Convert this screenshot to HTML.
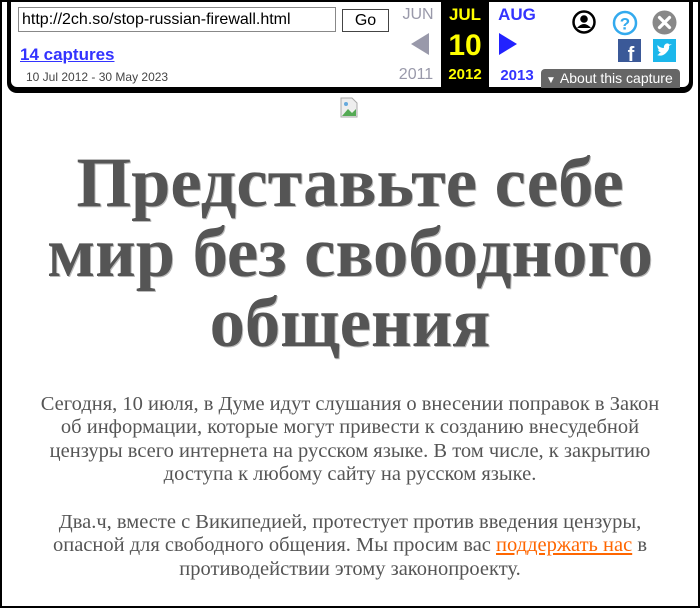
<!DOCTYPE html>
<html><head><meta charset="utf-8"><style>
html,body{margin:0;padding:0;background:#fff;width:700px;height:608px;overflow:hidden;position:relative}
#frame{position:absolute;left:0;top:0;width:696px;height:604px;border:2px solid #000;z-index:5;pointer-events:none}
#tb{position:absolute;left:7px;top:-8px;width:686px;height:101px;background:#000;border-radius:10px;z-index:3}
#in{position:absolute;left:4px;top:0;width:678px;height:95px;background:#fff;border-radius:0 0 6px 6px;font-family:"Liberation Sans",Arial,sans-serif}
.a{position:absolute}
#url{left:7px;top:15px;width:313px;height:23px;border:1px solid #888;font-size:16px;line-height:23px;padding-left:3px;color:#000;box-sizing:content-box}
#go{left:331px;top:17px;width:45px;height:21px;border:1px solid #444;font-size:16px;line-height:21px;text-align:center}
#col{left:430px;top:0;width:48px;height:95px;background:#000}
.m{font-size:16px;text-align:center;width:44px}
h1{position:absolute;left:0;top:148px;width:700px;margin:0;text-align:center;font-family:"Liberation Serif","Noto Serif CJK SC",serif;font-weight:bold;font-size:70.5px;line-height:70px;color:#555;text-shadow:1px 1px 0 #bbb}
p{position:absolute;left:0;width:700px;margin:0;text-align:center;font-family:"Liberation Serif","Noto Serif CJK SC",serif;font-size:20.5px;line-height:23.3px;color:#555;white-space:nowrap}
a.l{color:#f60;text-decoration:underline}
</style></head><body>
<div id="frame"></div>
<div id="tb"><div id="in">
<div class="a" id="url">http://2ch.so/stop-russian-firewall.html</div>
<div class="a" id="go">Go</div>
<div class="a" style="left:9px;top:53px;font-size:17px;font-weight:bold;color:#33f;text-decoration:underline">14 captures</div>
<div class="a" style="left:15px;top:78px;font-size:12px;color:#444">10 Jul 2012 - 30 May 2023</div>
<div class="a m" style="left:385px;top:14px;color:#99a">JUN</div>
<svg class="a" style="left:400px;top:41px" width="18" height="22"><polygon points="18,0 18,22 0,11" fill="#99a"/></svg>
<div class="a m" style="left:383px;top:74px;color:#99a">2011</div>
<div id="col" class="a"></div>
<div class="a m" style="left:432px;top:13px;color:#ff0;font-weight:bold;font-size:17px">JUL</div>
<div class="a m" style="left:432px;top:37px;color:#ff0;font-weight:bold;font-size:30px">10</div>
<div class="a m" style="left:432px;top:74px;color:#ff0;font-weight:bold;font-size:15px">2012</div>
<div class="a m" style="left:484px;top:13px;color:#33f;font-weight:bold;font-size:17px">AUG</div>
<svg class="a" style="left:488px;top:41px" width="18" height="22"><polygon points="0,0 0,22 18,11" fill="#22f"/></svg>
<div class="a m" style="left:484px;top:75px;color:#33f;font-weight:bold;font-size:15px">2013</div>
<svg class="a" style="left:561px;top:18px" width="24" height="24"><circle cx="12" cy="12" r="10.5" fill="none" stroke="#000" stroke-width="2.5"/><circle cx="12" cy="9" r="3.8" fill="#000"/><path d="M5 18 Q12 10 19 18 Z" fill="#000"/></svg>
<svg class="a" style="left:601px;top:18px" width="26" height="26"><circle cx="13" cy="13" r="11" fill="none" stroke="#3ae" stroke-width="2.5"/><text x="13" y="19.5" text-anchor="middle" font-family="Liberation Sans" font-weight="bold" font-size="17" fill="#3ae">?</text></svg>
<svg class="a" style="left:641px;top:18px" width="25" height="25"><circle cx="12.5" cy="12.5" r="12" fill="#888"/><path d="M7.5 7.5 L17.5 17.5 M17.5 7.5 L7.5 17.5" stroke="#fff" stroke-width="3.2" stroke-linecap="round"/></svg>
<svg class="a" style="left:607px;top:47px" width="23" height="23"><rect width="23" height="23" fill="#3b5998"/><text x="13" y="22" text-anchor="middle" font-family="Liberation Sans" font-weight="bold" font-size="20" fill="#fff">f</text></svg>
<svg class="a" style="left:642px;top:47px" width="23" height="23"><rect width="23" height="23" fill="#1cb7eb"/><path d="M4 16 Q9 18 13 14 Q17 10 16 7 L19 5 L16.5 5.5 Q14 3 11.5 6 Q10.5 8 11 9 Q7 9 4.5 6 Q4 9 6.5 11 L5 10.5 Q5.5 13 8 13.5 L6.5 14 Q5.5 16 4 16Z" fill="#fff"/></svg>
<div class="a" style="left:530px;top:77px;width:139px;height:19px;background:#666;border-radius:4px 4px 0 0;color:#fff;font-size:14px;line-height:19px"><span style="font-size:10px;margin:0 4px 0 5px">&#9660;</span>About this capture</div>
</div></div>
<svg style="position:absolute;left:338px;top:97px" width="24" height="22"><path d="M3 1 H14 L19 6 V20 H3 Z" fill="#eee" stroke="#aaa"/><path d="M4 19 L10 12 L14 16 L18 12 V19 Z" fill="#5a5"/><circle cx="8" cy="7" r="2" fill="#6ad"/></svg>
<h1>Представьте себе<br>мир без свободного<br>общения</h1>
<p style="top:393px">Сегодня, 10 июля, в Думе идут слушания о внесении поправок в Закон<br>об информации, которые могут привести к созданию внесудебной<br>цензуры всего интернета на русском языке. В том числе, к закрытию<br>доступа к любому сайту на русском языке.</p>
<p style="top:511px">Два.ч, вместе с Википедией, протестует против введения цензуры,<br>опасной для свободного общения. Мы просим вас <a class="l">поддержать нас</a> в<br>противодействии этому законопроекту.</p>
</body></html>
